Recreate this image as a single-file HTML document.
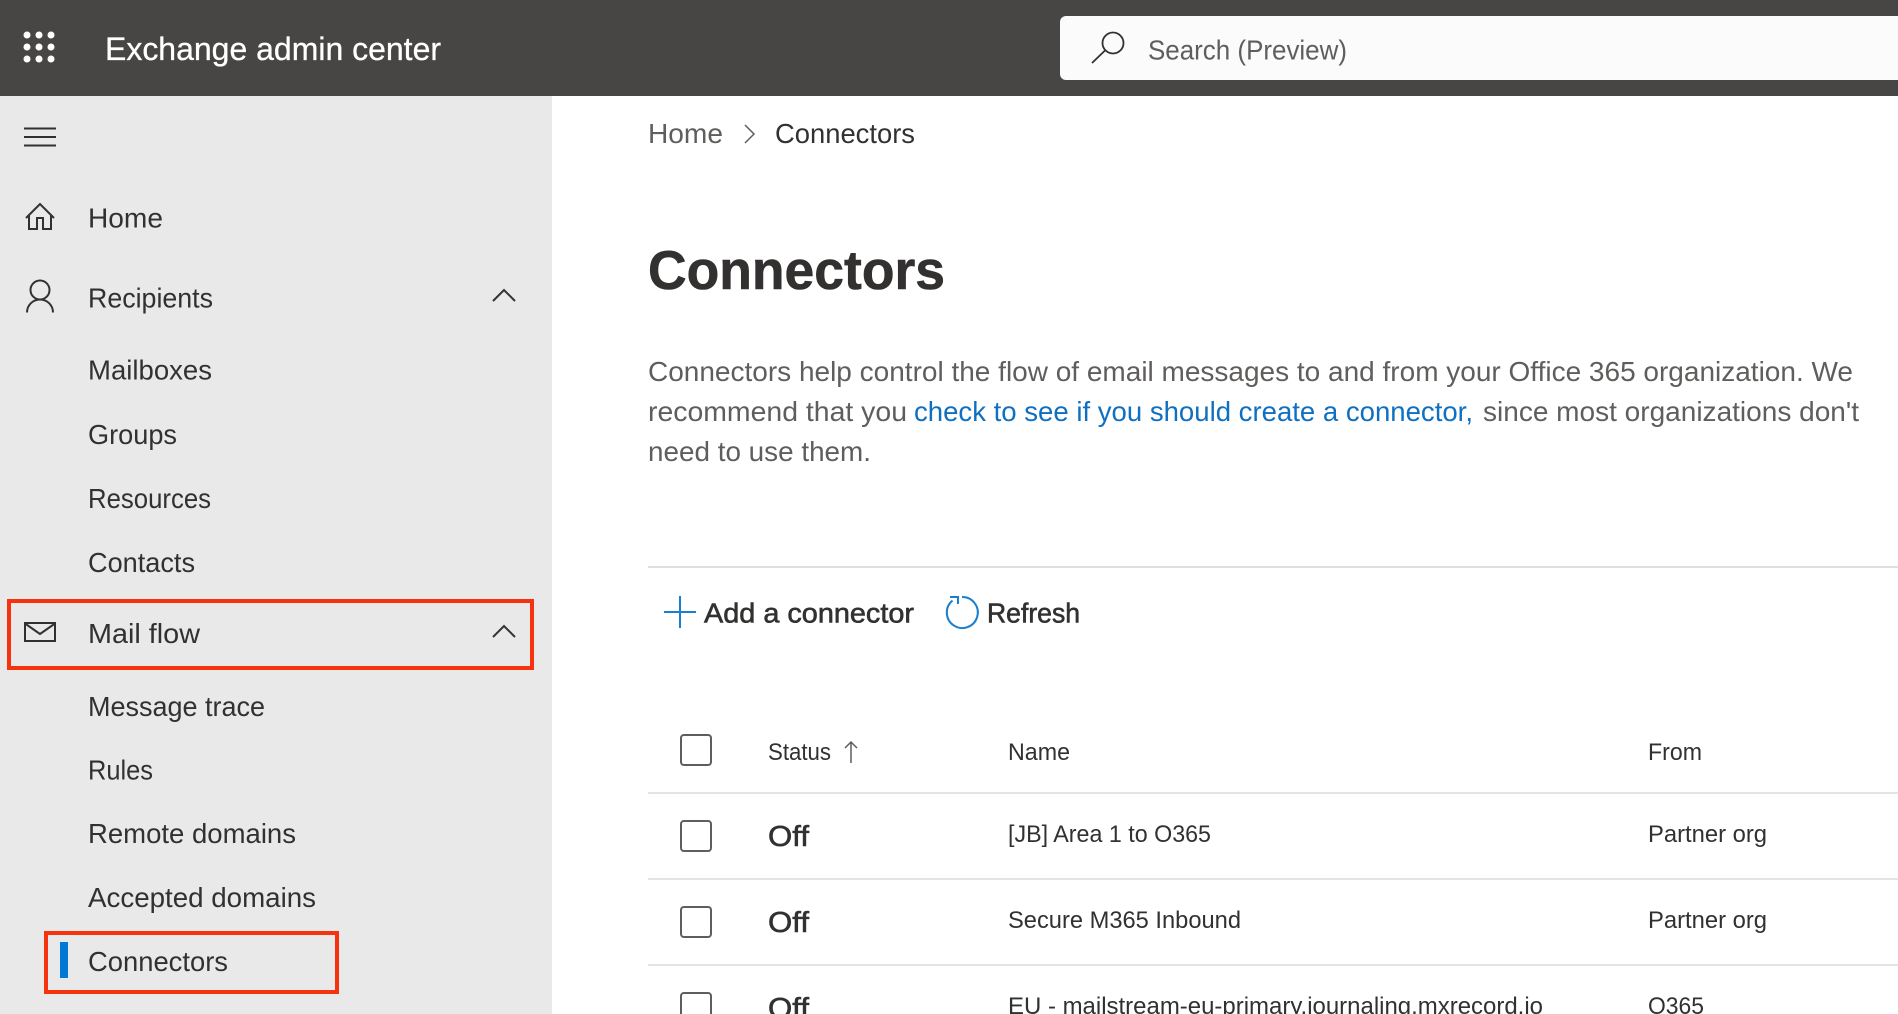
<!DOCTYPE html>
<html lang="en">
<head>
<meta charset="utf-8">
<title>Connectors - Exchange admin center</title>
<style>
html,body{margin:0;padding:0;background:#fff;width:1898px;height:1014px;overflow:hidden}
svg{display:block}
text{font-family:"Liberation Sans",sans-serif;font-size:28px;fill:#323130}
.g{fill:#605e5c}
.s{stroke:#323130;stroke-width:.6px}
.b{font-weight:700}
.t{font-size:24.500px}
.i{fill:none;stroke:#323130;stroke-width:2}
.c{fill:#fff;stroke:#605e5c;stroke-width:2}
.l{fill:#e6e4e2}
</style>
</head>
<body>
<svg width="1898" height="1014" viewBox="0 0 1898 1014" xmlns="http://www.w3.org/2000/svg">
<rect width="1898" height="1014" fill="#fff"/>
<rect y="96" width="552" height="918" fill="#e9e9e9"/>
<rect width="1898" height="96" fill="#484644"/>

<!-- waffle -->
<g fill="#fff">
<circle cx="27" cy="35" r="3.500"/><circle cx="39" cy="35" r="3.500"/><circle cx="51" cy="35" r="3.500"/>
<circle cx="27" cy="47" r="3.500"/><circle cx="39" cy="47" r="3.500"/><circle cx="51" cy="47" r="3.500"/>
<circle cx="27" cy="59" r="3.500"/><circle cx="39" cy="59" r="3.500"/><circle cx="51" cy="59" r="3.500"/>
</g>
<text x="105" y="60" style="font-size:32px;fill:#fff;stroke:#fff;stroke-width:.3px" textLength="336" lengthAdjust="spacingAndGlyphs">Exchange admin center</text>

<!-- search -->
<path d="M1898 16H1066a6 6 0 0 0-6 6v52a6 6 0 0 0 6 6h832z" fill="#fbfbfb"/>
<circle cx="1113" cy="43" r="10.500" fill="none" stroke="#323130" stroke-width="1.800"/>
<path d="M1105 50.500L1092 63" fill="none" stroke="#323130" stroke-width="1.800"/>
<text x="1148" y="59.500" class="g" textLength="199" lengthAdjust="spacingAndGlyphs">Search (Preview)</text>

<!-- hamburger -->
<path d="M24 128.500H56M24 137H56M24 145.500H56" class="i"/>

<!-- home -->
<path d="M26 218L40 204L54 218M29 215V229H37V218H43V229H51V215" class="i"/>
<text x="88" y="227.500" textLength="75" lengthAdjust="spacingAndGlyphs">Home</text>

<!-- recipients -->
<circle cx="40" cy="290" r="9.500" class="i"/>
<path d="M27 312.500C27 305 33 299.500 40 299.500C47 299.500 53 305 53 312.500" class="i"/>
<text x="88" y="307.500" textLength="125" lengthAdjust="spacingAndGlyphs">Recipients</text>
<path d="M493 301L504 290L515 301" class="i"/>

<text x="88" y="379.500" textLength="124" lengthAdjust="spacingAndGlyphs">Mailboxes</text>
<text x="88" y="444" textLength="89" lengthAdjust="spacingAndGlyphs">Groups</text>
<text x="88" y="508" textLength="123" lengthAdjust="spacingAndGlyphs">Resources</text>
<text x="88" y="572" textLength="107" lengthAdjust="spacingAndGlyphs">Contacts</text>

<!-- mail flow -->
<rect x="25" y="623" width="30" height="18" class="i"/>
<path d="M25 623.500L40 634L55 623.500" class="i"/>
<text x="88" y="643" textLength="112" lengthAdjust="spacingAndGlyphs">Mail flow</text>
<path d="M493 637L504 626L515 637" class="i"/>
<rect x="9" y="601" width="523" height="67" fill="none" stroke="#f5330f" stroke-width="4"/>

<text x="88" y="716" textLength="177" lengthAdjust="spacingAndGlyphs">Message trace</text>
<text x="88" y="779.500" textLength="65" lengthAdjust="spacingAndGlyphs">Rules</text>
<text x="88" y="843" textLength="208" lengthAdjust="spacingAndGlyphs">Remote domains</text>
<text x="88" y="907" textLength="228" lengthAdjust="spacingAndGlyphs">Accepted domains</text>
<rect x="60" y="942" width="8" height="36" fill="#0078d4"/>
<text x="88" y="971" textLength="140" lengthAdjust="spacingAndGlyphs">Connectors</text>
<rect x="46" y="933" width="291" height="59" fill="none" stroke="#f5330f" stroke-width="4"/>

<!-- breadcrumb -->
<text x="648" y="143" class="g" textLength="75" lengthAdjust="spacingAndGlyphs">Home</text>
<path d="M745 125L754 134L745 143" fill="none" stroke="#605e5c" stroke-width="1.500"/>
<text x="775" y="143" textLength="140" lengthAdjust="spacingAndGlyphs">Connectors</text>

<!-- heading -->
<text x="648" y="289" class="b" style="font-size:55px;stroke:#323130;stroke-width:.6px" textLength="297" lengthAdjust="spacingAndGlyphs">Connectors</text>

<!-- paragraph -->
<text x="648" y="381" class="g" textLength="1205" lengthAdjust="spacingAndGlyphs">Connectors help control the flow of email messages to and from your Office 365 organization. We</text>
<text x="648" y="421" class="g" textLength="259" lengthAdjust="spacingAndGlyphs">recommend that you</text>
<text x="914" y="421" style="fill:#0f6fc0" textLength="559" lengthAdjust="spacingAndGlyphs">check to see if you should create a connector,</text>
<text x="1483" y="421" class="g" textLength="376" lengthAdjust="spacingAndGlyphs">since most organizations don't</text>
<text x="648" y="461" class="g" textLength="223" lengthAdjust="spacingAndGlyphs">need to use them.</text>

<rect x="648" y="566" width="1250" height="2" fill="#e1dfdd"/>

<!-- toolbar -->
<path d="M664 612H696M680 596V628" fill="none" stroke="#1b7fcf" stroke-width="2"/>
<text x="704" y="622.500" class="s" textLength="210" lengthAdjust="spacingAndGlyphs">Add a connector</text>
<path d="M952.500 600.500A15.500 15.500 0 1 0 962 597" fill="none" stroke="#1b7fcf" stroke-width="2"/>
<path d="M950 597H958V604" fill="none" stroke="#1b7fcf" stroke-width="2"/>
<text x="987" y="622.500" class="s" textLength="93" lengthAdjust="spacingAndGlyphs">Refresh</text>

<!-- table header -->
<rect x="681" y="735" width="30" height="30" rx="3" class="c"/>
<text x="768" y="760" class="t" textLength="63" lengthAdjust="spacingAndGlyphs">Status</text>
<path d="M851 763V742M845 748L851 742L857 748" fill="none" stroke="#605e5c" stroke-width="1.500"/>
<text x="1008" y="760" class="t" textLength="62" lengthAdjust="spacingAndGlyphs">Name</text>
<text x="1648" y="760" class="t" textLength="54" lengthAdjust="spacingAndGlyphs">From</text>
<rect x="648" y="792" width="1250" height="2" class="l"/>

<!-- rows -->
<rect x="681" y="821" width="30" height="30" rx="3" class="c"/>
<text x="768" y="846" class="s" style="font-size:29px" textLength="41" lengthAdjust="spacingAndGlyphs">Off</text>
<text x="1008" y="842" class="t" textLength="203" lengthAdjust="spacingAndGlyphs">[JB] Area 1 to O365</text>
<text x="1648" y="842" class="t" textLength="119" lengthAdjust="spacingAndGlyphs">Partner org</text>
<rect x="648" y="878" width="1250" height="2" class="l"/>

<rect x="681" y="907" width="30" height="30" rx="3" class="c"/>
<text x="768" y="932" class="s" style="font-size:29px" textLength="41" lengthAdjust="spacingAndGlyphs">Off</text>
<text x="1008" y="928" class="t" textLength="233" lengthAdjust="spacingAndGlyphs">Secure M365 Inbound</text>
<text x="1648" y="928" class="t" textLength="119" lengthAdjust="spacingAndGlyphs">Partner org</text>
<rect x="648" y="964" width="1250" height="2" class="l"/>

<rect x="681" y="993" width="30" height="30" rx="3" class="c"/>
<text x="768" y="1018" class="s" style="font-size:29px" textLength="41" lengthAdjust="spacingAndGlyphs">Off</text>
<text x="1008" y="1014" class="t" textLength="535" lengthAdjust="spacingAndGlyphs">EU - mailstream-eu-primary.journaling.mxrecord.io</text>
<text x="1648" y="1014" class="t" textLength="56" lengthAdjust="spacingAndGlyphs">O365</text>
</svg>
</body>
</html>
